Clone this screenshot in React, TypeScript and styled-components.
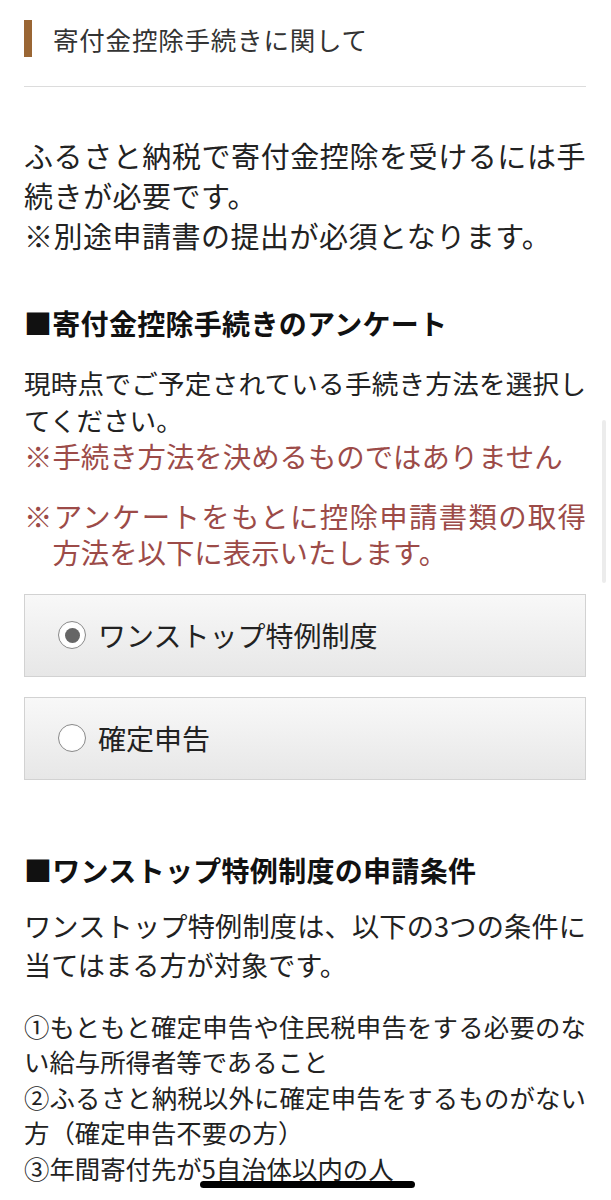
import { useState } from 'react';
import styled, { createGlobalStyle } from 'styled-components';

const GlobalStyle = createGlobalStyle`
  body {
    margin: 0;
    background: #fff;
    font-family: 'Noto Sans CJK JP', 'Noto Sans', sans-serif;
    color: #222;
  }
`;

const Page = styled.main`
  padding: 20px 25px 40px 24px;
  text-align: justify;
`;

const Header = styled.header`
  display: flex;
  align-items: center;
  gap: 21px;
  padding-bottom: 29px;
  border-bottom: 1px solid #dcdcdc;
`;

const HeaderBar = styled.span`
  width: 8px;
  height: 37px;
  background: #9a6634;
`;

const HeaderTitle = styled.h1`
  margin: 0;
  font-size: 25.5px;
  font-weight: 400;
  letter-spacing: 0.8px;
  color: #333;
`;

const Lead = styled.p`
  margin: 48px 0 0;
  font-size: 29px;
  letter-spacing: 0.5px;
  line-height: 40px;
`;

const SectionTitle = styled.h2<{ $gap: number }>`
  margin: ${({ $gap }) => $gap}px 0 0;
  font-size: 28px;
  font-weight: 700;
  line-height: 40px;
  letter-spacing: 0.3px;
  color: #111;
`;

const Body = styled.p<{ $size: number; $line: number; $gap: number }>`
  margin: ${({ $gap }) => $gap}px 0 0;
  font-size: ${({ $size }) => $size}px;
  line-height: ${({ $line }) => $line}px;
`;

const Note = styled.p<{ $gap: number }>`
  margin: ${({ $gap }) => $gap}px 0 0;
  padding-left: 1em;
  text-indent: -1em;
  font-size: 28.4px;
  line-height: 36.5px;
  color: #9c4b48;
`;

const Options = styled.div`
  display: flex;
  flex-direction: column;
  gap: 20px;
  margin-top: 23px;
`;

const Option = styled.label`
  display: flex;
  align-items: center;
  gap: 12px;
  height: 83px;
  padding-left: 33px;
  border: 1px solid #d2d2d2;
  background: linear-gradient(#f8f8f8, #e7e7e7);
  font-size: 28px;
  color: #222;
  box-sizing: border-box;
  cursor: pointer;
`;

const Radio = styled.input`
  appearance: none;
  margin: 0;
  width: 28px;
  height: 28px;
  border-radius: 50%;
  border: 1px solid #8a8a8a;
  background: radial-gradient(circle, #fff 60%, #f0f0f0);
  display: grid;
  place-items: center;

  &:checked::after {
    content: '';
    width: 15px;
    height: 15px;
    border-radius: 50%;
    background: #666;
  }
`;

const Conditions = styled.p`
  margin: 25px 0 0;
  font-size: 25.4px;
  line-height: 35.5px;
`;

const ScrollThumb = styled.div`
  position: fixed;
  right: 5px;
  top: 420px;
  width: 4px;
  height: 163px;
  border-radius: 2px;
  background: #ececec;
`;

const HomeIndicator = styled.div`
  position: fixed;
  left: 200px;
  top: 1181px;
  width: 215px;
  height: 7px;
  border-radius: 4px;
  background: #000;
`;

const choices = ['ワンストップ特例制度', '確定申告'];

export default function App() {
  const [choice, setChoice] = useState(choices[0]);

  return (
    <>
      <GlobalStyle />
      <Page>
        <Header>
          <HeaderBar />
          <HeaderTitle>寄付金控除手続きに関して</HeaderTitle>
        </Header>

        <Lead>
          ふるさと納税で寄付金控除を受けるには手続きが必要です。
          <br />
          ※別途申請書の提出が必須となります。
        </Lead>

        <SectionTitle $gap={48}>■寄付金控除手続きのアンケート</SectionTitle>
        <Body $size={26.6} $line={37} $gap={21}>
          現時点でご予定されている手続き方法を選択してください。
        </Body>
        <Note $gap={0}>※手続き方法を決めるものではありません</Note>
        <Note $gap={23}>※アンケートをもとに控除申請書類の取得方法を以下に表示いたします。</Note>

        <Options>
          {choices.map((c) => (
            <Option key={c}>
              <Radio
                type="radio"
                name="procedure"
                checked={choice === c}
                onChange={() => setChoice(c)}
              />
              {c}
            </Option>
          ))}
        </Options>

        <SectionTitle $gap={70}>■ワンストップ特例制度の申請条件</SectionTitle>
        <Body $size={27.2} $line={39} $gap={16}>
          ワンストップ特例制度は、以下の3つの条件に当てはまる方が対象です。
        </Body>
        <Conditions>
          ①もともと確定申告や住民税申告をする必要のない給与所得者等であること
          <br />
          ②ふるさと納税以外に確定申告をするものがない方（確定申告不要の方）
          <br />
          ③年間寄付先が5自治体以内の人
        </Conditions>
      </Page>
      <ScrollThumb />
      <HomeIndicator />
    </>
  );
}
